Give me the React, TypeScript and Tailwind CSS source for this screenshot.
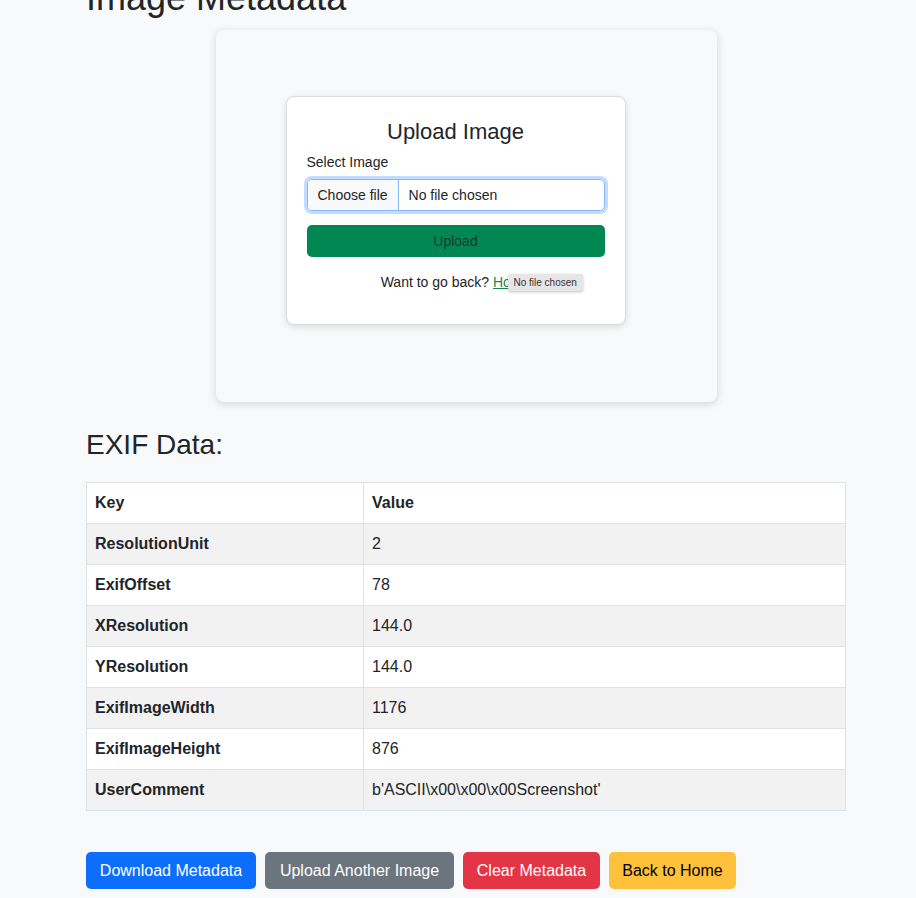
const rows: [string, string][] = [
  ['ResolutionUnit', '2'],
  ['ExifOffset', '78'],
  ['XResolution', '144.0'],
  ['YResolution', '144.0'],
  ['ExifImageWidth', '1176'],
  ['ExifImageHeight', '876'],
  ['UserComment', "b'ASCII\\x00\\x00\\x00Screenshot'"],
];

function UploadCard() {
  return (
    <div className="mx-auto w-[501px] h-[372px] rounded-lg bg-[#f8f9fa] shadow-[0_2px_8px_rgba(0,0,0,0.15)] pt-[66px] pl-[70px]">
      <div className="w-[340px] h-[229px] rounded-lg border border-[#dcdcdc] bg-white shadow-[0_2px_6px_rgba(0,0,0,0.12)] px-5 pt-[20px]">
        <h4 className="text-center text-[22px] font-medium leading-[30px] text-[#212529]">Upload Image</h4>
        <label className="block mt-[5px] text-[14px] leading-[20px] text-[#212529]">Select Image</label>
        <div className="mt-[7px] flex h-[32px] rounded-[5px] border border-[#86b7fe] ring-[3px] ring-[#0d6efd]/25 overflow-hidden text-[14px] text-[#212529]">
          <span className="flex items-center px-[10px] bg-[#f8f9fa] border-r border-[#86b7fe]">Choose file</span>
          <span className="flex items-center px-[10px]">No file chosen</span>
        </div>
        <button className="mt-[14px] block w-full h-[32px] rounded-[5px] bg-[#008753] text-[14px] text-[#1c3a2c]">Upload</button>
        <p className="relative mt-[15px] text-center text-[14px] leading-[20px] text-[#212529]">
          Want to go back? <a className="text-[#198754] underline">Home</a>
          <span className="absolute left-[201px] top-[2px] whitespace-nowrap rounded-[3px] bg-[#e6e6e6] px-[6px] py-[1px] text-[10px] leading-[15px] text-[#333] shadow-[0_1px_3px_rgba(0,0,0,0.25)]">No file chosen</span>
        </p>
      </div>
    </div>
  );
}

export default function App() {
  return (
    <div className="min-h-screen bg-[#f8f9fa] font-['Liberation_Sans',Arial,sans-serif] text-[#212529] overflow-hidden">
      <div className="ml-[86px] w-[760px]">
        <h1 className="-mt-[26px] mb-[8px] text-[36px] font-medium leading-[48px]">Image Metadata</h1>
        <UploadCard />
        <h3 className="mt-[26px] mb-[20px] text-[28px] font-medium leading-[34px]">EXIF Data:</h3>
        <table className="w-full border-collapse border border-[#dee2e6] text-[16px]">
          <thead>
            <tr className="bg-white">
              <th className="w-[277px] border border-[#dee2e6] px-2 py-2 text-left font-bold leading-[24px]">Key</th>
              <th className="border border-[#dee2e6] px-2 py-2 text-left font-bold leading-[24px]">Value</th>
            </tr>
          </thead>
          <tbody>
            {rows.map(([k, v], i) => (
              <tr key={k} className={i % 2 === 0 ? 'bg-[#f2f2f2]' : 'bg-white'}>
                <td className="border border-[#dee2e6] px-2 py-2 font-bold leading-[24px]">{k}</td>
                <td className="border border-[#dee2e6] px-2 py-2 leading-[24px]">{v}</td>
              </tr>
            ))}
          </tbody>
        </table>
        <div className="mt-[41px] flex gap-[9px] text-[16px] pb-4">
          <button className="h-[37px] w-[170px] rounded-[5px] bg-[#0d6efd] text-white">Download Metadata</button>
          <button className="h-[37px] w-[189px] rounded-[5px] bg-[#6c757d] text-white">Upload Another Image</button>
          <button className="h-[37px] w-[137px] rounded-[5px] bg-[#e43546] text-white">Clear Metadata</button>
          <button className="h-[37px] w-[127px] rounded-[5px] bg-[#ffc13b] text-black">Back to Home</button>
        </div>
      </div>
    </div>
  );
}
